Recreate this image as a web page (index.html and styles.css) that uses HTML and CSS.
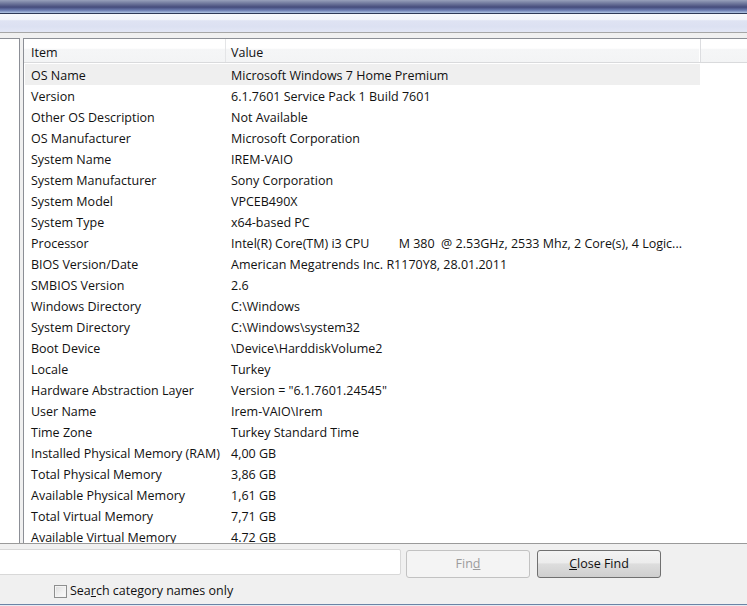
FILE: index.html
```html
<!DOCTYPE html>
<html>
<head>
<meta charset="utf-8">
<title>System Information</title>
<link rel="stylesheet" href="styles.css">
</head>
<body>
<div class="window">
  <div class="titlebar"></div>
  <div class="menubar"></div>
  <div class="main">
    <div class="tree"></div>
    <div class="list">
      <div class="header">
        <div class="hcol h1">Item</div>
        <div class="hcol h2">Value</div>
        <div class="hcol h3"></div>
      </div>
      <div class="rows">
        <div class="row sel"><span class="c1">OS Name</span><span class="c2">Microsoft Windows 7 Home Premium</span></div>
        <div class="row"><span class="c1">Version</span><span class="c2">6.1.7601 Service Pack 1 Build 7601</span></div>
        <div class="row"><span class="c1">Other OS Description</span><span class="c2">Not Available</span></div>
        <div class="row"><span class="c1">OS Manufacturer</span><span class="c2">Microsoft Corporation</span></div>
        <div class="row"><span class="c1">System Name</span><span class="c2">IREM-VAIO</span></div>
        <div class="row"><span class="c1">System Manufacturer</span><span class="c2">Sony Corporation</span></div>
        <div class="row"><span class="c1">System Model</span><span class="c2">VPCEB490X</span></div>
        <div class="row"><span class="c1">System Type</span><span class="c2">x64-based PC</span></div>
        <div class="row"><span class="c1">Processor</span><span class="c2 pre">Intel(R) Core(TM) i3 CPU         M 380  @ 2.53GHz, 2533 Mhz, 2 Core(s), 4 Logic...</span></div>
        <div class="row"><span class="c1">BIOS Version/Date</span><span class="c2">American Megatrends Inc. R1170Y8, 28.01.2011</span></div>
        <div class="row"><span class="c1">SMBIOS Version</span><span class="c2">2.6</span></div>
        <div class="row"><span class="c1">Windows Directory</span><span class="c2">C:\Windows</span></div>
        <div class="row"><span class="c1">System Directory</span><span class="c2">C:\Windows\system32</span></div>
        <div class="row"><span class="c1">Boot Device</span><span class="c2">\Device\HarddiskVolume2</span></div>
        <div class="row"><span class="c1">Locale</span><span class="c2">Turkey</span></div>
        <div class="row"><span class="c1">Hardware Abstraction Layer</span><span class="c2">Version = "6.1.7601.24545"</span></div>
        <div class="row"><span class="c1">User Name</span><span class="c2">Irem-VAIO\Irem</span></div>
        <div class="row"><span class="c1">Time Zone</span><span class="c2">Turkey Standard Time</span></div>
        <div class="row"><span class="c1">Installed Physical Memory (RAM)</span><span class="c2">4,00 GB</span></div>
        <div class="row"><span class="c1">Total Physical Memory</span><span class="c2">3,86 GB</span></div>
        <div class="row"><span class="c1">Available Physical Memory</span><span class="c2">1,61 GB</span></div>
        <div class="row"><span class="c1">Total Virtual Memory</span><span class="c2">7,71 GB</span></div>
        <div class="row"><span class="c1">Available Virtual Memory</span><span class="c2">4.72 GB</span></div>
      </div>
    </div>
  </div>
  <div class="findbar">
    <div class="findrow">
      <div class="search"></div>
      <div class="btn disabled">Fin<u>d</u></div>
      <div class="btn"><u>C</u>lose Find</div>
    </div>
    <div class="checkrow">
      <span class="box"></span><span class="checklabel">Sea<u>r</u>ch category names only</span>
    </div>
  </div>
  <div class="bottomline"></div>
</div>
</body>
</html>
```

FILE: styles.css
```css
html, body {
  margin: 0;
  padding: 0;
}
body {
  width: 747px;
  height: 606px;
  overflow: hidden;
  background: #f0f0f0;
  font-family: "Open Sans", "Noto Sans", sans-serif;
  font-size: 12.5px;
  color: #111;
}
.window {
  display: flex;
  flex-direction: column;
  height: 606px;
}
.titlebar {
  height: 13px;
  flex: none;
  background: linear-gradient(to bottom, #98a1bb 0%, #6a7298 30%, #454c7c 55%, #6f80b4 80%, #b4c8e6 100%);
}
.menubar {
  height: 18px;
  flex: none;
  border-top: 1px solid #2e3a58;
  border-bottom: 1px solid #a6a6a6;
  background: linear-gradient(to bottom, #f7f9fd 0%, #f3f5fb 30%, #dfe3f3 38%, #dce1f2 70%, #e3e7f5 100%);
}
.main {
  flex: none;
  height: 505px;
  margin-top: 5px;
  display: flex;
  overflow: hidden;
}
.tree {
  width: 19px;
  flex: none;
  background: #fff;
  border-top: 1px solid #8c8f96;
  border-right: 1px solid #8c8f96;
}
.list {
  flex: 1;
  margin-left: 3px;
  background: #fff;
  border-top: 1px solid #8c8f96;
  border-left: 1px solid #8c8f96;
  overflow: hidden;
}
.header {
  display: flex;
  height: 23px;
  border-bottom: 1px solid #d9dadc;
  background: linear-gradient(to bottom, #ffffff 0%, #ffffff 40%, #f5f6f7 45%, #f3f4f5 100%);
}
.hcol {
  height: 23px;
  padding-top: 2px;
  line-height: 23px;
  padding-left: 7px;
  box-sizing: border-box;
  overflow: hidden;
}
.h1 {
  width: 202px;
  border-right: 1px solid #e4e5e7;
}
.h2 {
  width: 475px;
  padding-left: 5px;
  border-right: 1px solid #dcdde0;
  box-shadow: inset -1px 0 0 #ffffff;
}
.h3 {
  flex: 1;
}
.rows {
  padding-top: 1px;
  padding-left: 1px;
}
.row {
  display: flex;
  width: 675px;
  height: 21px;
  box-sizing: border-box;
  padding-top: 2px;
  line-height: 19px;
  white-space: nowrap;
}
.row.sel {
  background: #efefef;
}
.c1 {
  width: 200px;
  padding-left: 6px;
  box-sizing: border-box;
  flex: none;
}
.c2 {
  padding-left: 6px;
  flex: none;
}
.pre {
  white-space: pre;
}
.findbar {
  flex: none;
  height: 60px;
  border-top: 1px solid #9a9a9a;
  background: #f0f0f0;
}
.findrow {
  display: flex;
  align-items: flex-start;
  padding-top: 5px;
}
.search {
  width: 402px;
  height: 24px;
  margin-left: -3px;
  background: #fff;
  border: 1px solid #d8d8d8;
  border-radius: 2px;
}
.btn {
  width: 122px;
  height: 26px;
  margin-top: 1px;
  line-height: 26px;
  text-align: center;
  border: 1px solid #707070;
  border-radius: 3px;
  background: linear-gradient(to bottom, #f3f3f3 0%, #ececec 45%, #dddddd 50%, #cfcfcf 100%);
  color: #111;
  margin-left: 7px;
}
.btn.disabled {
  margin-left: 5px;
  border-color: #c2c2c2;
  background: #f4f4f4;
  color: #9c9c9c;
}
.checkrow {
  display: flex;
  align-items: center;
  padding-left: 54px;
  margin-top: 5px;
}
.box {
  width: 11px;
  height: 11px;
  border: 1px solid #8e8f8f;
  background: linear-gradient(135deg, #dcdcdc 0%, #f2f2f2 60%, #fbfbfb 100%);
  box-shadow: inset 0 0 0 1px #f4f4f4;
}
.checklabel {
  margin-left: 3px;
  line-height: 16px;
}
.bottomline {
  flex: none;
  height: 1px;
  border-top: 1px solid #6a84a6;
  background: #e6ebf2;
}
```
